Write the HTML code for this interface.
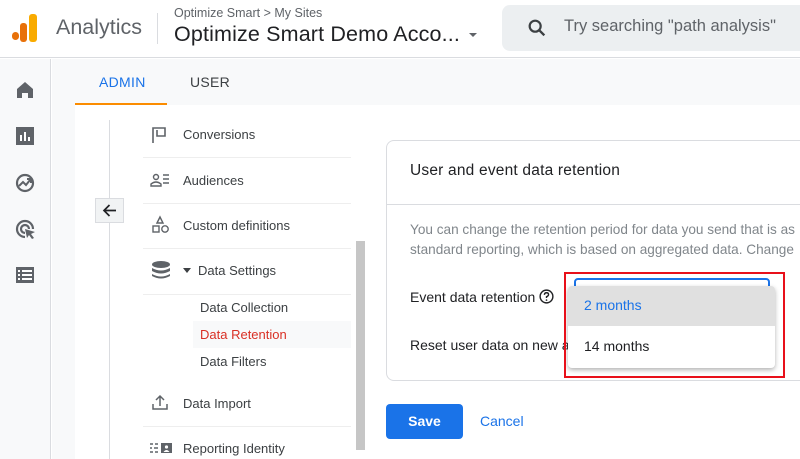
<!DOCTYPE html>
<html><head><style>
*{margin:0;padding:0;box-sizing:border-box}
body{width:800px;height:459px;overflow:hidden;background:#fff;font-family:"Liberation Sans",Arial,sans-serif;position:relative;color:#3c4043}
.a{position:absolute}
.t{font-size:13px;color:#3c4043;white-space:nowrap}
</style></head><body>
<div class="a" style="left:0;top:0;width:800px;height:58px;border-bottom:1px solid #dadce0;background:#fff"></div>
<div class="a" style="left:12px;top:32px;width:7px;height:8px;border-radius:4px;background:#e8710a"></div>
<div class="a" style="left:20px;top:23px;width:7px;height:19px;border-radius:3px;background:#e8710a"></div>
<div class="a" style="left:29px;top:14px;width:8px;height:28px;border-radius:3px;background:#f9ab00"></div>
<div class="a" style="left:56px;top:15px;font-size:21.5px;color:#5f6368">Analytics</div>
<div class="a" style="left:157px;top:13px;width:1px;height:31px;background:#dadce0"></div>
<div class="a" style="left:174px;top:6px;font-size:12.5px;color:#5f6368">Optimize Smart &gt; My Sites</div>
<div class="a" style="left:174px;top:22px;font-size:21.5px;color:#202124;white-space:nowrap;letter-spacing:0.15px">Optimize Smart Demo Acco...</div>
<div class="a" style="left:469px;top:33px;border-left:4px solid transparent;border-right:4px solid transparent;border-top:4px solid #5f6368"></div>
<div class="a" style="left:502px;top:5px;width:310px;height:46px;border-radius:8px;background:#eceff1"></div>
<svg class="a" style="left:526px;top:17px" width="22" height="22" viewBox="0 0 24 24"><circle cx="10" cy="10" r="6" fill="none" stroke="#3c4043" stroke-width="2.4"/><path d="M14.5 14.5 L20 20" stroke="#3c4043" stroke-width="2.6"/></svg>
<div class="a" style="left:564px;top:17px;font-size:16.5px;color:#5f6368;white-space:nowrap">Try searching "path analysis"</div>
<div class="a" style="left:0;top:59px;width:51px;height:400px;background:#f8f9fa;border-right:1px solid #dadce0"></div>
<svg class="a" style="left:15px;top:80px" width="20" height="20" viewBox="0 0 20 20"><path d="M2 9 L10 2 L18 9 V18 H13 V13 H7 V18 H2Z" fill="#5f6368"/></svg>
<svg class="a" style="left:16px;top:127px" width="18" height="18" viewBox="0 0 18 18"><rect width="18" height="18" fill="#5f6368"/><rect x="4" y="8" width="2" height="6" fill="#fff"/><rect x="8" y="5" width="2" height="9" fill="#fff"/><rect x="12" y="10" width="2" height="4" fill="#fff"/></svg>
<svg class="a" style="left:15px;top:173px" width="20" height="20" viewBox="0 0 20 20"><circle cx="10" cy="10" r="8" fill="none" stroke="#5f6368" stroke-width="2.2"/><path d="M4 13 L8 9 L11 12 L15 7" fill="none" stroke="#5f6368" stroke-width="2"/><path d="M12 6 H16 V10" fill="none" stroke="#5f6368" stroke-width="2"/></svg>
<svg class="a" style="left:15px;top:219px" width="22" height="22" viewBox="0 0 22 22"><path d="M10 18 A8 8 0 1 1 18 10" fill="none" stroke="#5f6368" stroke-width="2.2"/><path d="M10 14 A4 4 0 1 1 14 10" fill="none" stroke="#5f6368" stroke-width="2.2"/><path d="M10 10 L20 13 L16 15 L19 19 L17 20 L14 16 L12 19Z" fill="#5f6368"/></svg>
<svg class="a" style="left:16px;top:267px" width="18" height="16" viewBox="0 0 18 16"><rect width="18" height="16" fill="#5f6368"/><g fill="#fff"><rect x="2" y="3" width="2" height="2"/><rect x="6" y="3" width="10" height="2"/><rect x="2" y="7" width="2" height="2"/><rect x="6" y="7" width="10" height="2"/><rect x="2" y="11" width="2" height="2"/><rect x="6" y="11" width="10" height="2"/></g></svg>
<div class="a" style="left:52px;top:59px;width:748px;height:400px;background:#f8f9fa"></div>
<div class="a" style="left:75px;top:105px;width:725px;height:354px;background:#fff"></div>
<div class="a" style="left:99px;top:74px;font-size:14px;color:#1a73e8;letter-spacing:.3px">ADMIN</div>
<div class="a" style="left:75px;top:103px;width:92px;height:2px;background:#fb8c00"></div>
<div class="a" style="left:190px;top:74px;font-size:14px;color:#3c4043;letter-spacing:.3px">USER</div>
<div class="a" style="left:109px;top:120px;width:1px;height:339px;background:#dadce0"></div>
<div class="a" style="left:95px;top:198px;width:29px;height:25px;background:#f1f3f4;border:1px solid #dadce0"></div>
<svg class="a" style="left:101px;top:202px" width="17" height="17" viewBox="0 0 17 17"><path d="M15 8.5 H3 M8.5 3 L3 8.5 L8.5 14" fill="none" stroke="#202124" stroke-width="1.7"/></svg>
<svg class="a" style="left:151px;top:126px" width="18" height="18" viewBox="0 0 18 18"><path d="M2 17 V2 H14 V10 H6 V4" fill="none" stroke="#5f6368" stroke-width="1.6"/></svg>
<div class="a t" style="left:183px;top:127px">Conversions</div>
<div class="a" style="left:143px;top:157px;width:208px;height:1px;background:#eee"></div>
<svg class="a" style="left:150px;top:172px" width="22" height="16" viewBox="0 0 22 16"><circle cx="6" cy="5" r="2.5" fill="none" stroke="#5f6368" stroke-width="1.4"/><path d="M1 14 V12 Q6 8 11 12 V14Z" fill="none" stroke="#5f6368" stroke-width="1.4"/><path d="M13 3H19M13 7H19M13 11H19" stroke="#5f6368" stroke-width="1.4"/></svg>
<div class="a t" style="left:183px;top:173px">Audiences</div>
<div class="a" style="left:143px;top:203px;width:208px;height:1px;background:#eee"></div>
<svg class="a" style="left:151px;top:215px" width="20" height="20" viewBox="0 0 20 20"><path d="M6 8 L9 2 L12 8Z" fill="none" stroke="#5f6368" stroke-width="1.4"/><rect x="2" y="11" width="6" height="6" fill="none" stroke="#5f6368" stroke-width="1.4"/><circle cx="14" cy="14" r="3.2" fill="none" stroke="#5f6368" stroke-width="1.4"/></svg>
<div class="a t" style="left:183px;top:218px">Custom definitions</div>
<div class="a" style="left:143px;top:248px;width:208px;height:1px;background:#eee"></div>
<svg class="a" style="left:151px;top:261px" width="20" height="19" viewBox="0 0 20 19"><ellipse cx="10" cy="3.5" rx="9" ry="3.5" fill="#5f6368"/><path d="M1 7 Q10 12 19 7 V10 Q10 15 1 10Z" fill="#5f6368"/><path d="M1 13 Q10 18 19 13 V15 Q10 20 1 15Z" fill="#5f6368"/></svg>
<div class="a" style="left:183px;top:268px;border-left:4.5px solid transparent;border-right:4.5px solid transparent;border-top:5px solid #3c4043"></div>
<div class="a t" style="left:198px;top:263px">Data Settings</div>
<div class="a" style="left:143px;top:294px;width:208px;height:1px;background:#eee"></div>
<div class="a t" style="left:200px;top:300px">Data Collection</div>
<div class="a" style="left:193px;top:321px;width:158px;height:27px;background:#f8f9fa"></div>
<div class="a t" style="left:200px;top:327px;color:#d93025">Data Retention</div>
<div class="a t" style="left:200px;top:354px">Data Filters</div>
<svg class="a" style="left:151px;top:393px" width="18" height="18" viewBox="0 0 18 18"><path d="M2 11 V16 H16 V11" fill="none" stroke="#5f6368" stroke-width="1.5"/><path d="M9 13 V3 M5 7 L9 3 L13 7" fill="none" stroke="#5f6368" stroke-width="1.5"/></svg>
<div class="a t" style="left:183px;top:396px">Data Import</div>
<div class="a" style="left:143px;top:426px;width:208px;height:1px;background:#eee"></div>
<svg class="a" style="left:149px;top:442px" width="24" height="12" viewBox="0 0 24 12"><path d="M1 2H4M6 2H9M1 6H3M5 6H9M1 10H4M6 10H9" stroke="#5f6368" stroke-width="1.4"/><rect x="12" y="1" width="11" height="10" fill="#5f6368"/><circle cx="17.5" cy="5" r="1.6" fill="#fff"/><path d="M14.5 10 Q17.5 6 20.5 10Z" fill="#fff"/></svg>
<div class="a t" style="left:183px;top:441px">Reporting Identity</div>
<div class="a" style="left:356px;top:241px;width:9px;height:209px;background:#c6c6c6"></div>
<div class="a" style="left:386px;top:140px;width:430px;height:241px;border:1px solid #dadce0;border-radius:8px;background:#fff"></div>
<div class="a" style="left:387px;top:204px;width:413px;height:1px;background:#dadce0"></div>
<div class="a" style="left:410px;top:162px;font-size:15.5px;color:#202124;white-space:nowrap;letter-spacing:0.2px">User and event data retention</div>
<div class="a" style="left:410px;top:220px;font-size:13.6px;color:#80868b;line-height:19.5px;white-space:nowrap">You can change the retention period for data you send that is as<br>standard reporting, which is based on aggregated data. Change</div>
<div class="a" style="left:410px;top:289px;font-size:14px;color:#202124;white-space:nowrap">Event data retention</div>
<svg class="a" style="left:539px;top:289px" width="15" height="15" viewBox="0 0 16 16"><circle cx="8" cy="8" r="6.8" fill="none" stroke="#202124" stroke-width="1.5"/><path d="M5.8 6.2 Q5.8 4 8 4 Q10.2 4 10.2 6 Q10.2 7.3 8 8.3 V9.6" fill="none" stroke="#202124" stroke-width="1.5"/><circle cx="8" cy="11.8" r=".9" fill="#202124"/></svg>
<div class="a" style="left:410px;top:337px;font-size:14px;color:#202124;white-space:nowrap">Reset user data on new ac</div>
<div class="a" style="left:574px;top:278px;width:196px;height:30px;border:2px solid #1a73e8;border-radius:4px;background:#fff"></div>
<div class="a" style="left:568px;top:286px;width:207px;height:82px;background:#fff;border-radius:4px;box-shadow:0 2px 5px rgba(0,0,0,.3)"></div>
<div class="a" style="left:568px;top:286px;width:207px;height:40px;background:#e0e0e0;border-radius:4px 4px 0 0"></div>
<div class="a" style="left:584px;top:297px;font-size:14px;color:#1a73e8">2 months</div>
<div class="a" style="left:584px;top:338px;font-size:14px;color:#202124">14 months</div>
<div class="a" style="left:564px;top:272px;width:221px;height:106px;border:2px solid #e8101a"></div>
<div class="a" style="left:386px;top:404px;width:77px;height:35px;background:#1a73e8;border-radius:4px;color:#fff;font-size:14px;font-weight:bold;text-align:center;line-height:35px">Save</div>
<div class="a" style="left:480px;top:413px;font-size:14px;color:#1a73e8">Cancel</div>
</body></html>
